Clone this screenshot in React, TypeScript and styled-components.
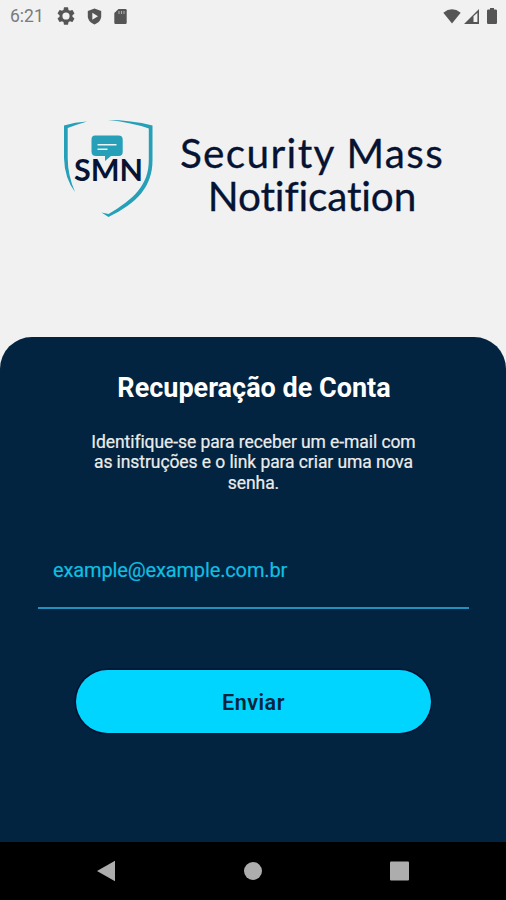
import React from "react";
import styled, { createGlobalStyle } from "styled-components";

const GlobalStyle = createGlobalStyle`
  * { box-sizing: border-box; }
  body { margin: 0; background: #f1f1f1; font-family: Roboto, "Liberation Sans", sans-serif; }
`;

const Screen = styled.div`
  display: flex;
  flex-direction: column;
  width: 506px;
  height: 900px;
  overflow: hidden;
  background: #f1f1f1;
`;

const StatusBar = styled.header`
  display: flex;
  justify-content: space-between;
  align-items: center;
  height: 32px;
  padding: 0 9px 0 10px;
  color: #555;
`;

const Clock = styled.span`
  width: 47px;
  font-size: 17.5px;
  line-height: 20px;
  color: #7a7a7a;
`;

const StatusGroup = styled.div<{ $gap: number }>`
  display: flex;
  align-items: center;
  gap: ${(p) => p.$gap}px;
`;

const Brand = styled.section`
  display: flex;
  height: 305px;
  padding: 78px 0 0 54px;
`;

const Wordmark = styled.h1`
  width: 284px;
  margin: 21px 0 0 6px;
  font: 400 40.5px/43px Lato, sans-serif;
  -webkit-text-stroke: 0.3px #061332;
  text-align: center;
  color: #061332;
`;

const WordmarkLine = styled.span<{ $tracking: number }>`
  display: block;
  white-space: nowrap;
  letter-spacing: ${(p) => p.$tracking}px;
  font-variant-ligatures: none;
`;

const Panel = styled.main`
  display: flex;
  flex-direction: column;
  align-items: center;
  height: 505px;
  border-radius: 32px 32px 0 0;
  background: #022440;
`;

const Title = styled.h2`
  margin: 35px 0 0 2px;
  font-size: 27px;
  line-height: 32px;
  font-weight: 700;
  color: #fff;
  white-space: nowrap;
`;

const Description = styled.p`
  width: 340px;
  margin: 28px 0 0 1px;
  font-size: 17.5px;
  line-height: 20.3px;
  letter-spacing: -0.08px;
  text-align: center;
  color: #ececec;
  -webkit-text-stroke: 0.2px #ececec;
`;

const EmailField = styled.input`
  width: 431px;
  height: 74px;
  margin: 42px 0 0 1px;
  padding: 0 15px 1px;
  border: 0;
  border-bottom: 2px solid #2490bd;
  outline: 0;
  background: transparent;
  font: 400 20px Roboto, sans-serif;
  letter-spacing: -0.14px;
  color: #10bfe0;
  &::placeholder { color: #10bfe0; opacity: 1; -webkit-text-stroke: 0.2px #10bfe0; }
`;

const SubmitButton = styled.button`
  width: 355px;
  height: 63px;
  margin: 61px 0 0 1px;
  padding: 3px 0 0;
  border: 0;
  border-radius: 32px;
  background: #00d5ff;
  box-shadow: 0 0 0 1.5px #001031;
  font: 600 21.5px Roboto, sans-serif;
  letter-spacing: 0.5px;
  color: #04243a;
`;

const NavBar = styled.footer`
  display: flex;
  align-items: center;
  justify-content: space-between;
  height: 58px;
  padding: 0 96px;
  background: #000;
`;

const SettingsIcon = () => (
  <svg width="18" height="18" viewBox="2 2 20 20" fill="currentColor">
    <path fillRule="evenodd" d="M19.140 12.940c.040-.300.060-.610.060-.940s-.020-.640-.070-.940l2.030-1.580a.49.49 0 0 0 .120-.610l-1.920-3.320a.49.49 0 0 0-.590-.220l-2.390.960a7 7 0 0 0-1.620-.940l-.360-2.540A.48.48 0 0 0 13.920 2.400h-3.840a.48.48 0 0 0-.480.410l-.360 2.540a7 7 0 0 0-1.620.940l-2.390-.960a.48.48 0 0 0-.590.220L2.720 8.870a.48.48 0 0 0 .120.610l2.030 1.580a6 6 0 0 0 0 1.880l-2.030 1.580a.49.49 0 0 0-.120.610l1.920 3.320c.120.220.370.290.590.220l2.390-.960c.500.380 1.030.700 1.620.940l.360 2.540c.050.240.240.410.480.410h3.840c.240 0 .440-.170.470-.410l.360-2.540a7 7 0 0 0 1.620-.940l2.390.960c.220.080.470 0 .590-.220l1.920-3.320a.48.48 0 0 0-.120-.610zM12 16a4 4 0 1 1 0-8 4 4 0 0 1 0 8z" />
  </svg>
);

const ShieldPlayIcon = () => (
  <svg width="15" height="17" viewBox="0 0 15 17">
    <path fill="currentColor" d="M7.5.5 14.2 3v5.3c0 3.7-2.8 6.6-6.7 8.2C3.6 14.900.8 12 .8 8.300V3z" />
    <path fill="#f1f1f1" d="M5.3 4.700 11 8.200l-5.700 3.500z" />
  </svg>
);

const SdCardIcon = () => (
  <svg width="13" height="17" viewBox="0 0 13 17">
    <path fill="currentColor" d="M4.500 1H11.500Q12.700 1 12.700 2.200V14.500Q12.700 16 11.500 16H1.500Q.3 16 .3 14.500V5z" />
    <path stroke="#aaa" strokeWidth="1.100" d="M5 3v3M7.500 3v3M10 3v3" />
  </svg>
);

const WifiIcon = () => (
  <svg width="18" height="15" viewBox="0 0 18 15">
    <path fill="currentColor" d="M.3 3.700Q9-3 17.700 3.700L9 14.500z" />
  </svg>
);

const SignalIcon = () => (
  <svg width="15" height="15" viewBox="0 0 15 15">
    <path fill="currentColor" d="M0 15 15 0v15zM9.500 7.300V13H13.400V3.800z" fillRule="evenodd" />
  </svg>
);

const BatteryIcon = () => (
  <svg width="10" height="16" viewBox="0 0 10 16">
    <path fill="currentColor" d="M3 0h4v1.500h1.800Q10 1.500 10 2.700v12Q10 16 8.800 16H1.200Q0 16 0 14.700v-12Q0 1.500 1.200 1.500H3z" />
  </svg>
);

const ShieldLogo = () => (
  <svg width="110" height="115" viewBox="54 110 110 115">
    <g fill="#269fb9">
      <path d="M87 121.500Q75 122 64 125.500V158Q64.500 178 75 192Q67.700 175 67.700 158V128Q77 124.500 87 121.500Z" />
      <path d="M108 120Q131 120 152.500 125.500V160C152.500 187 137 203 108.500 217L101.500 212.500L108.500 214C134 199 148.800 185 148.800 160V128.500Q130 122 108 120Z" />
      <path d="M95 135.500H118.500Q122.700 135.500 122.700 139.700V152Q122.700 156 118.500 156H111L105 161V156H96Q91.500 156 91.500 151.500V139.500Q91.500 135.500 95 135.500Z" />
    </g>
    <path d="M97.500 144.700H116.500M97.500 149.200H107.500" stroke="#e8f5f7" strokeWidth="1.500" />
    <text x="74" y="181" textLength="69" lengthAdjust="spacingAndGlyphs" fontFamily="Lato, sans-serif" fontWeight="700" fontSize="29.500" fill="#061332">SMN</text>
  </svg>
);

export default function App() {
  return (
    <>
      <GlobalStyle />
      <Screen>
        <StatusBar>
          <StatusGroup $gap={0}>
            <Clock>6:21</Clock>
            <StatusGroup $gap={12}>
              <SettingsIcon />
              <ShieldPlayIcon />
              <SdCardIcon />
            </StatusGroup>
          </StatusGroup>
          <StatusGroup $gap={3}>
            <WifiIcon />
            <StatusGroup $gap={8}>
              <SignalIcon />
              <BatteryIcon />
            </StatusGroup>
          </StatusGroup>
        </StatusBar>
        <Brand>
          <ShieldLogo />
          <Wordmark>
            <WordmarkLine $tracking={1.35}>Security Mass</WordmarkLine>
            <WordmarkLine $tracking={-0.15}>Notification</WordmarkLine>
          </Wordmark>
        </Brand>
        <Panel>
          <Title>Recuperação de Conta</Title>
          <Description>
            Identifique-se para receber um e-mail com as instruções e o link para criar uma nova senha.
          </Description>
          <EmailField type="email" placeholder="example@example.com.br" />
          <SubmitButton type="button">Enviar</SubmitButton>
        </Panel>
        <NavBar>
          <svg width="20" height="22" viewBox="0 0 20 22"><path d="M1 11 19 .7v20.600z" fill="#adadad" /></svg>
          <svg width="18" height="18" viewBox="0 0 18 18"><circle cx="9" cy="9" r="9" fill="#adadad" /></svg>
          <svg width="20" height="20" viewBox="0 0 20 20"><rect width="19" height="19" y=".5" rx="1" fill="#adadad" /></svg>
        </NavBar>
      </Screen>
    </>
  );
}
